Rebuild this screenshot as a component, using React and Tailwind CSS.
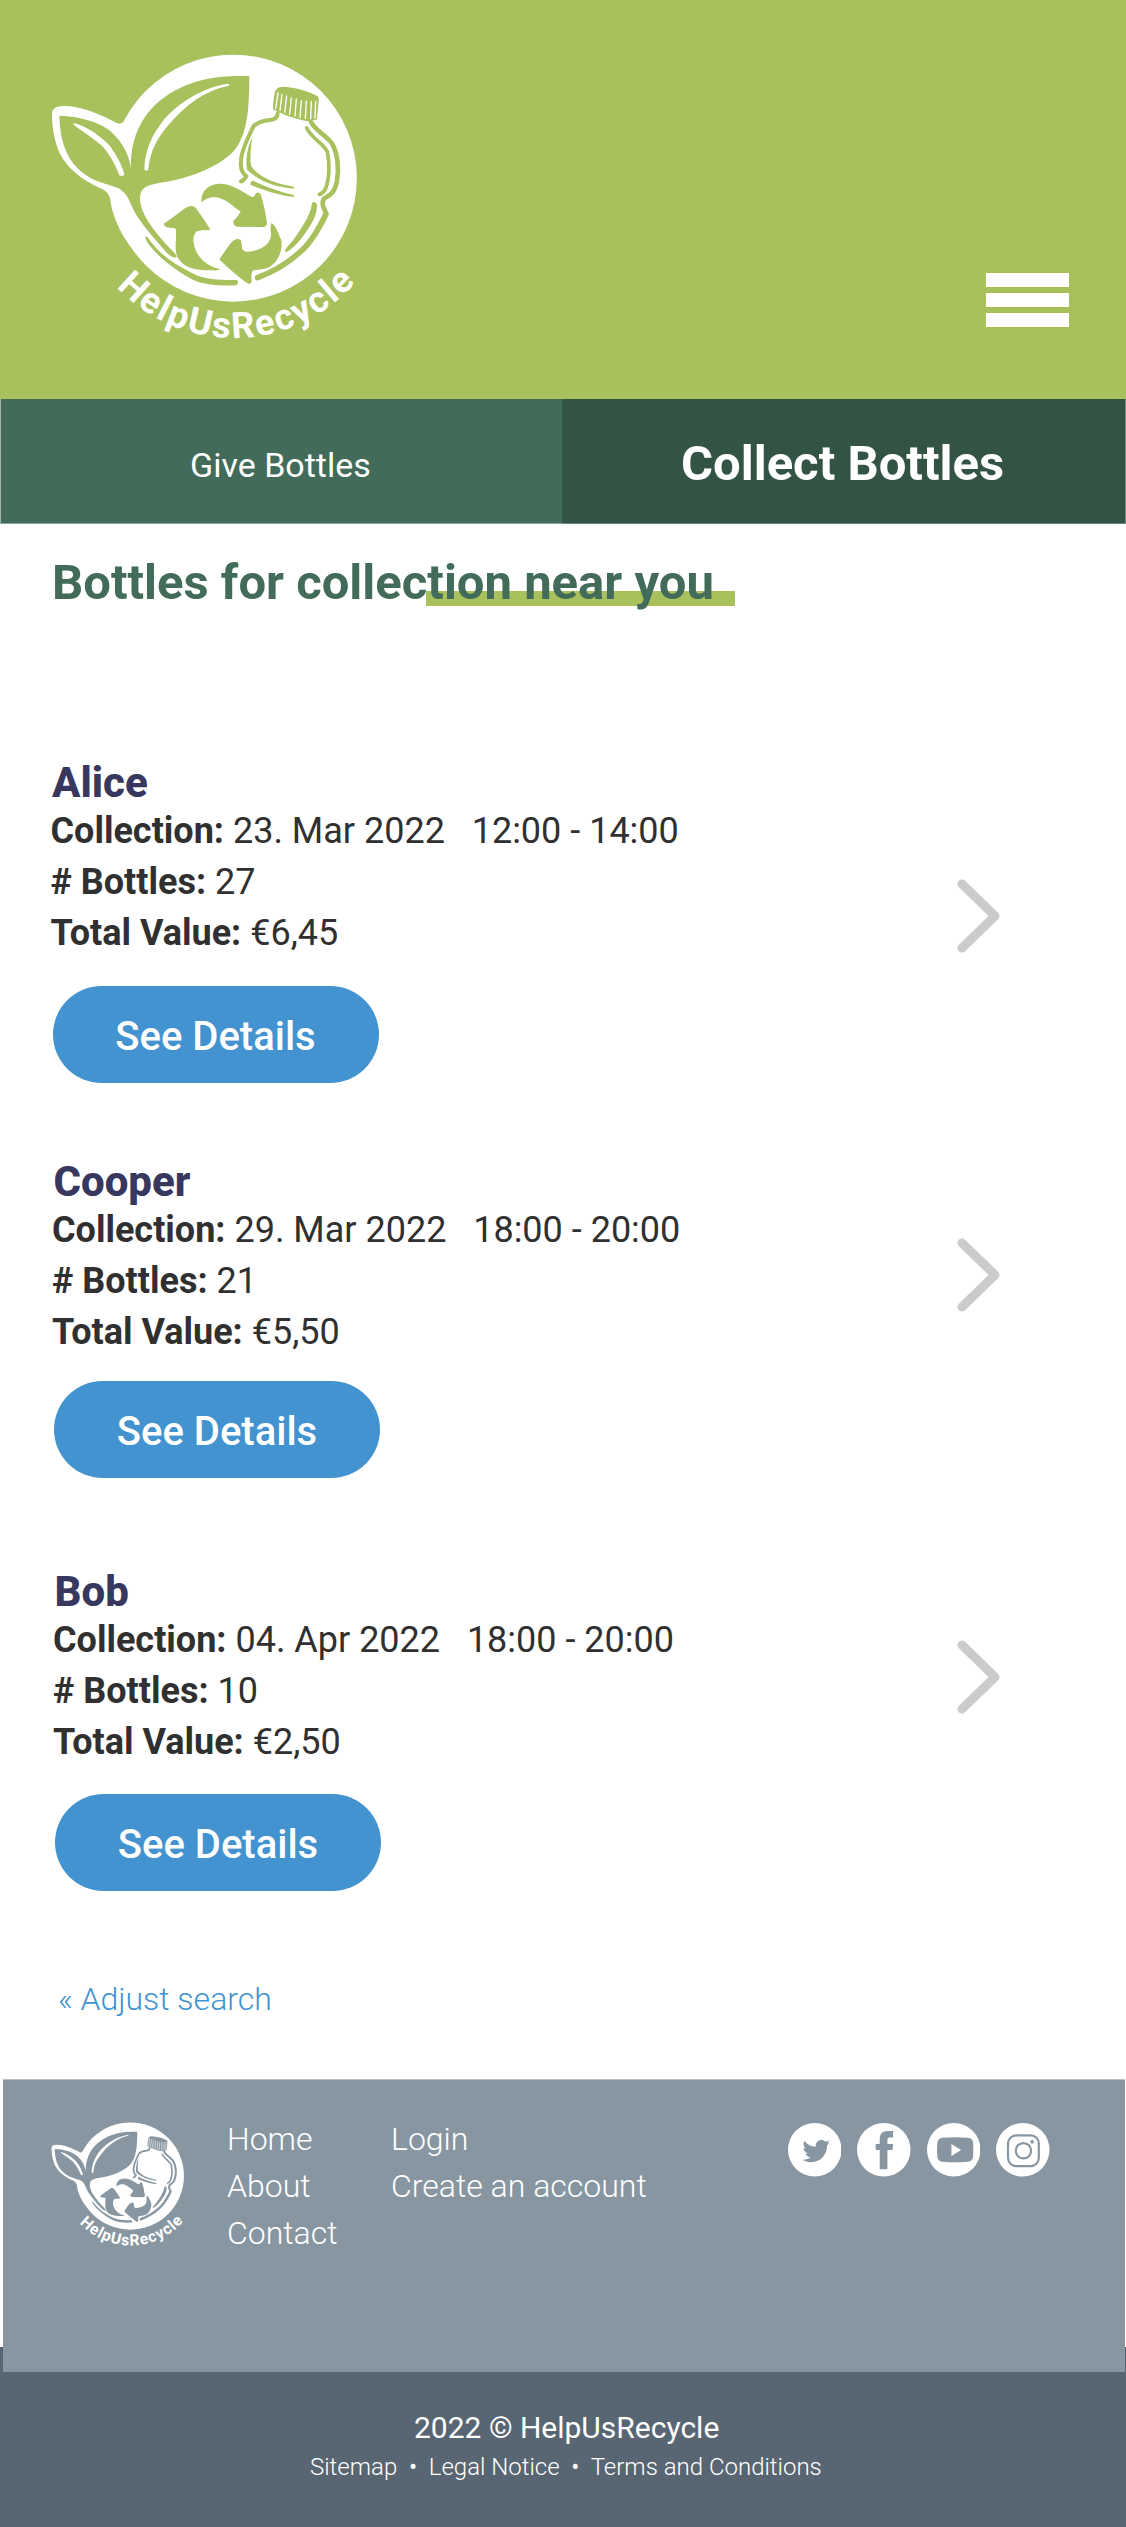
import React from "react";
import { FaTwitter } from "react-icons/fa";

/* Brand mark: leaf sprout and bottle cut out of a white disc, name set on an arc. */
function Logo({ className, cut, id }) {
  return (
    <svg viewBox="0 0 1050 930" className={className} role="img" aria-label="HelpUsRecycle">
      <g fill="#fff">
        <circle cx="610" cy="414.5" r="370.5" />
        <path d="M345 155 C312 190 295 235 280 246 Q268 256 256 247 C210 222 150 198 105 198 Q66 196 66 222 C66 250 70 290 84 328 C102 375 150 420 215 446 Q235 455 240 475 C246 520 262 565 300 618 L400 500 Z" />
      </g>
      <g fill={cut}>
        <path d="M658 109 C500 100 400 155 345 230 C312 280 302 330 302 386 C298 345 280 308 240 272 C205 245 150 229 88 227 C90 290 102 345 145 387 C195 432 235 430 268 446 C295 462 300 490 312 512 C325 540 370 592 405 632 C420 648 430 655 439 652 C442 648 435 640 425 630 C400 605 365 565 345 528 C332 500 328 485 331 462 C337 440 360 433 400 427 C480 415 560 382 605 340 C650 295 658 220 658 109Z" />
        <path d="M735 155 Q740 141 756 140 C795 141 835 153 862 168 Q868 172 866 184 L861 236 Q858 242 850 240 L834 244 C800 238 775 230 748 217 L729 208 Q728 190 732 172 Z" />
        <path d="M667 293 C662 320 658 370 665 380 C690 415 740 432 792 440 L791 446 C735 440 690 425 652 390 C645 370 652 315 667 293Z" />
        <path d="M670 422 C705 440 750 456 792 465 L791 471 C745 466 700 450 664 436 Q656 426 670 422Z" />
        <path d="M846 489 Q854 482 861 493 C862 520 850 545 832 570 C812 600 790 625 768 637 Q762 632 768 626 C800 590 842 530 846 489Z" />
        <path d="M346 590 C350 586 355 595 360 602 C400 655 450 682 505 708 C540 720 580 720 620 720 Q628 726 620 736 C570 738 530 735 495 722 C440 695 390 655 360 618 Q346 600 346 590Z" />
        <path d="M514 488 C512 450 540 430 572 431 C610 432 645 460 668 472 Q674 470 678 460 Q686 454 692 462 C700 490 708 520 711 550 Q710 561 700 561 L622 560 Q608 556 610 543 Q622 532 632 516 C610 500 590 478 560 472 C535 470 525 478 514 488Z" />
        <path d="M403 550 Q430 532 465 505 Q485 492 497 503 Q520 535 541 568 Q535 572 520 570 L500 574 Q488 585 491 608 C497 650 530 680 570 687 Q568 692 550 691 C500 692 460 685 442 650 C432 625 440 600 438 570 Q436 562 425 564 L408 561 Q400 556 403 550Z" />
        <path d="M570 655 Q580 640 600 612 Q618 590 632 600 Q636 612 637 628 Q642 636 652 635 C690 632 725 615 723 580 Q720 560 724 549 C735 552 745 580 754 600 C758 625 750 660 720 680 C700 690 680 688 668 692 Q662 700 665 722 Q664 733 655 731 C630 715 590 680 573 663 Q568 660 570 655Z" />
      </g>
      <g fill="none" stroke={cut} strokeLinecap="round" strokeLinejoin="round">
        <path strokeWidth="12" d="M743 220 Q742 236 725 239 C700 241 685 245 671 258 C655 290 634 330 633 362 C631 385 638 402 649 408 Q644 420 633 424" />
        <path strokeWidth="14" d="M843 246 C858 275 895 290 908 314 C924 345 927 390 921 422 C914 455 905 464 885 474 C875 480 876 500 886 514" />
        <path strokeWidth="17" d="M888 522 C870 560 840 612 808 638 C775 668 730 695 683 713" />
        <path strokeWidth="11" d="M830 264 C845 295 878 308 892 335 C900 370 898 420 886 448 Q878 461 868 463" />
      </g>
      <g fill="#fff">
        <path d="M597 131 C530 138 455 180 405 235 C365 285 345 330 343 388 Q349 397 355 388 C360 330 385 290 420 250 C480 180 540 148 597 137Z" />
        <path d="M131 249 C170 258 215 290 240 318 C262 350 275 375 283 402 Q280 412 268 406 C258 380 245 352 220 322 C200 300 150 270 131 254Z" />
      </g>
      <path
        stroke="#fff"
        strokeWidth="4"
        strokeLinecap="round"
        d="M744 158 L737 206 M756 163 L750 211 M770 168 L764 217 M784 174 L779 223 M799 177 L795 228 M814 181 L810 232 M829 183 L826 235 M844 184 L842 236 M857 184 L855 235"
      />
      <path id={id} fill="none" d="M130 412 A482 482 0 0 0 1094 412" />
      <text fill="#fff" fontFamily="Roboto, sans-serif" fontWeight="700" fontSize="109" letterSpacing="6">
        <textPath href={"#" + id} startOffset="361">HelpUsRecycle</textPath>
      </text>
    </svg>
  );
}

function Chevron({ className }) {
  return (
    <svg viewBox="0 0 44 74" className={className} fill="none" stroke="#cbcbcb" strokeWidth="9" strokeLinecap="round" strokeLinejoin="round">
      <path d="M5 5 L38 37 L5 69" />
    </svg>
  );
}

function Listing({ name, date, time, bottles, value, className, detailsClass, buttonClass, chevronClass }) {
  return (
    <article className={"flex items-start justify-between pr-[125.5px] " + className}>
      <div>
        <h2 className="ml-[1.5px] text-[42px] leading-[44px] font-extrabold text-[#38375e]">{name}</h2>
        <div className={"text-4xl leading-[51.2px] whitespace-pre text-[#303030] " + detailsClass}>
          <p><b>Collection:</b> {date}{"   "}{time}</p>
          <p><b># Bottles:</b> {bottles}</p>
          <p><b>Total Value:</b> {value}</p>
        </div>
        <button className={"ml-[2px] block h-[97px] w-[326px] rounded-full bg-[#4293d0] text-[40px] leading-[102px] font-medium text-white " + buttonClass}>
          See Details
        </button>
      </div>
      <Chevron className={"h-[74px] w-11 " + chevronClass} />
    </article>
  );
}

function Social({ children, label }) {
  return (
    <a aria-label={label} className="block size-[53.5px]">
      <svg viewBox="0 0 160 160" className="size-full">
        <circle cx="80" cy="80" r="80" fill="#fff" />
        {children}
      </svg>
    </a>
  );
}

const grey = "#8796a0";

export default function App() {
  return (
    <div className="w-[1126px] bg-white font-['Roboto',sans-serif]">
      <header className="flex h-[399px] items-start justify-between bg-[#a8c15d] pt-10 pr-[57px] pl-[30px]">
        <Logo id="arc-top" cut="#a8c15d" className="h-[310px] w-[350px]" />
        <button aria-label="Menu" className="mt-[232.5px] flex flex-col gap-[6px]">
          <span className="h-[14px] w-[83px] bg-white" />
          <span className="h-[14px] w-[83px] bg-white" />
          <span className="h-[14px] w-[83px] bg-white" />
        </button>
      </header>

      <nav className="flex h-[125px] text-white">
        <a className="w-[562px] border-b border-l border-b-[#8aa499] border-l-[#a0b5ac] bg-[#426b59] pt-[46px] pl-[189px] text-[34px] leading-10">Give Bottles</a>
        <a className="flex-1 border-r border-b border-[#6b8a80] bg-[#335345] pt-[35px] pl-[119px] text-[49px] leading-[60px] font-bold">Collect Bottles</a>
      </nav>

      <main className="h-[1555px] pt-[29px]">
        <h1 className="relative isolate ml-[52px] w-fit text-[49px] leading-[60px] font-bold text-[#426b59]">
          <span className="absolute top-[37.5px] left-[373.5px] -z-10 h-[15.5px] w-[309px] bg-[#a8c15d]" />
          Bottles for collection near you
        </h1>
        <Listing
          name="Alice" date="23. Mar 2022" time="12:00 - 14:00" bottles="27" value="€6,45"
          className="mt-[148px] h-[322px] pl-[50.5px]" detailsClass="mt-[0.6px]" buttonClass="mt-[26.8px]" chevronClass="mt-[118px]"
        />
        <Listing
          name="Cooper" date="29. Mar 2022" time="18:00 - 20:00" bottles="21" value="€5,50"
          className="mt-[77px] h-[318px] pl-[52px]" detailsClass="mt-[0.9px]" buttonClass="mt-[22.5px]" chevronClass="mt-[77.5px]"
        />
        <Listing
          name="Bob" date="04. Apr 2022" time="18:00 - 20:00" bottles="10" value="€2,50"
          className="mt-[92px] h-[322px] pl-[53px]" detailsClass="mt-[0.5px]" buttonClass="mt-[26.2px]" chevronClass="mt-[70px]"
        />
        <a className="mt-[87px] ml-[58px] block w-fit text-[32px] leading-10 font-light text-[#4293d0]">« Adjust search</a>
      </main>

      <footer className="text-white">
        <div className="relative z-10 mr-px ml-[3px] flex h-[293px] items-start border-t border-t-[#b7c0c6] bg-[#8796a0] text-[32px] leading-[47px] font-light">
          <Logo id="arc-foot" cut={grey} className="mt-[36.4px] ml-[39px] h-[134.7px] w-[152px]" />
          <nav className="mt-9 ml-[33px] w-[164px]">
            <a className="block">Home</a>
            <a className="block">About</a>
            <a className="block">Contact</a>
          </nav>
          <nav className="mt-9">
            <a className="block">Login</a>
            <a className="block">Create an account</a>
          </nav>
          <div className="mt-[43px] mr-[75.5px] ml-auto flex gap-4">
            <Social label="Twitter">
              <FaTwitter x="43" y="43" size="82" color={grey} />
            </Social>
            <Social label="Facebook">
              <path fill={grey} d="M68 138 V81 H56 V63 H68 V50 C68 32 76 24 93 24 H108 V43 H98 Q91 43 91 51 V63 H108 L106 81 H91 V138Z" />
            </Social>
            <Social label="YouTube">
              <path fill={grey} d="M46 44 Q84 41 122 44 Q137 45 138 60 Q139 80 138 101 Q136 115 122 116 Q84 119 46 116 Q32 115 31 101 Q29 80 31 60 Q32 45 46 44Z" />
              <path fill="#fff" d="M73 63 L102 81 L73 99Z" />
            </Social>
            <Social label="Instagram">
              <g fill="none" stroke={grey} strokeWidth="6.5">
                <rect x="36" y="37" width="92" height="92" rx="24" />
                <circle cx="82" cy="83" r="23" />
              </g>
              <circle cx="108" cy="56" r="5.5" fill={grey} />
            </Social>
          </div>
        </div>
        <div className="-mt-[25px] h-[180px] bg-[#586673] pt-[62px]">
          <p className="ml-[414px] text-3xl leading-[38px]">2022 © HelpUsRecycle</p>
          <p className="mt-[6px] ml-[310px] text-2xl leading-7 font-light whitespace-pre">
            <a>Sitemap</a>{"  "}<span className="font-normal">•</span>{"  "}<a>Legal Notice</a>{"  "}<span className="font-normal">•</span>{"  "}<a>Terms and Conditions</a>
          </p>
        </div>
      </footer>
    </div>
  );
}
